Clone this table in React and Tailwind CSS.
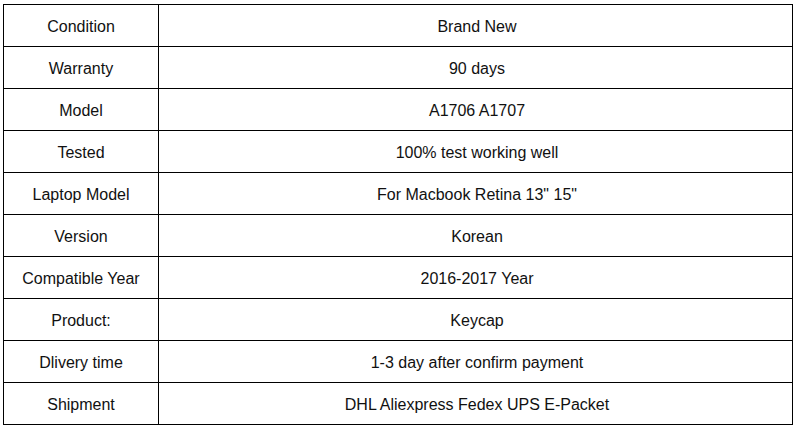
const rows = [
  ["Condition", "Brand New"],
  ["Warranty", "90 days"],
  ["Model", "A1706 A1707"],
  ["Tested", "100% test working well"],
  ["Laptop Model", "For Macbook Retina 13\" 15\""],
  ["Version", "Korean"],
  ["Compatible Year", "2016-2017 Year"],
  ["Product:", "Keycap"],
  ["Dlivery time", "1-3 day after confirm payment"],
  ["Shipment", "DHL Aliexpress Fedex UPS E-Packet"],
]

export default function App() {
  return (
    <div className="w-[796px] h-[433px] bg-white pt-[4px] pl-[3px] font-['Liberation_Sans',Arial,sans-serif] text-[16px] text-[#111]">
      <table className="w-[790px] border-collapse">
        <tbody>
          {rows.map(([label, value]) => (
            <tr key={label} className="h-[42px]">
              <td className="w-[155px] border-[1.5px] border-black text-center p-0 pt-[3px]">{label}</td>
              <td className="border-[1.5px] border-black text-center p-0 pt-[3px] pl-[3px]">{value}</td>
            </tr>
          ))}
        </tbody>
      </table>
    </div>
  )
}
